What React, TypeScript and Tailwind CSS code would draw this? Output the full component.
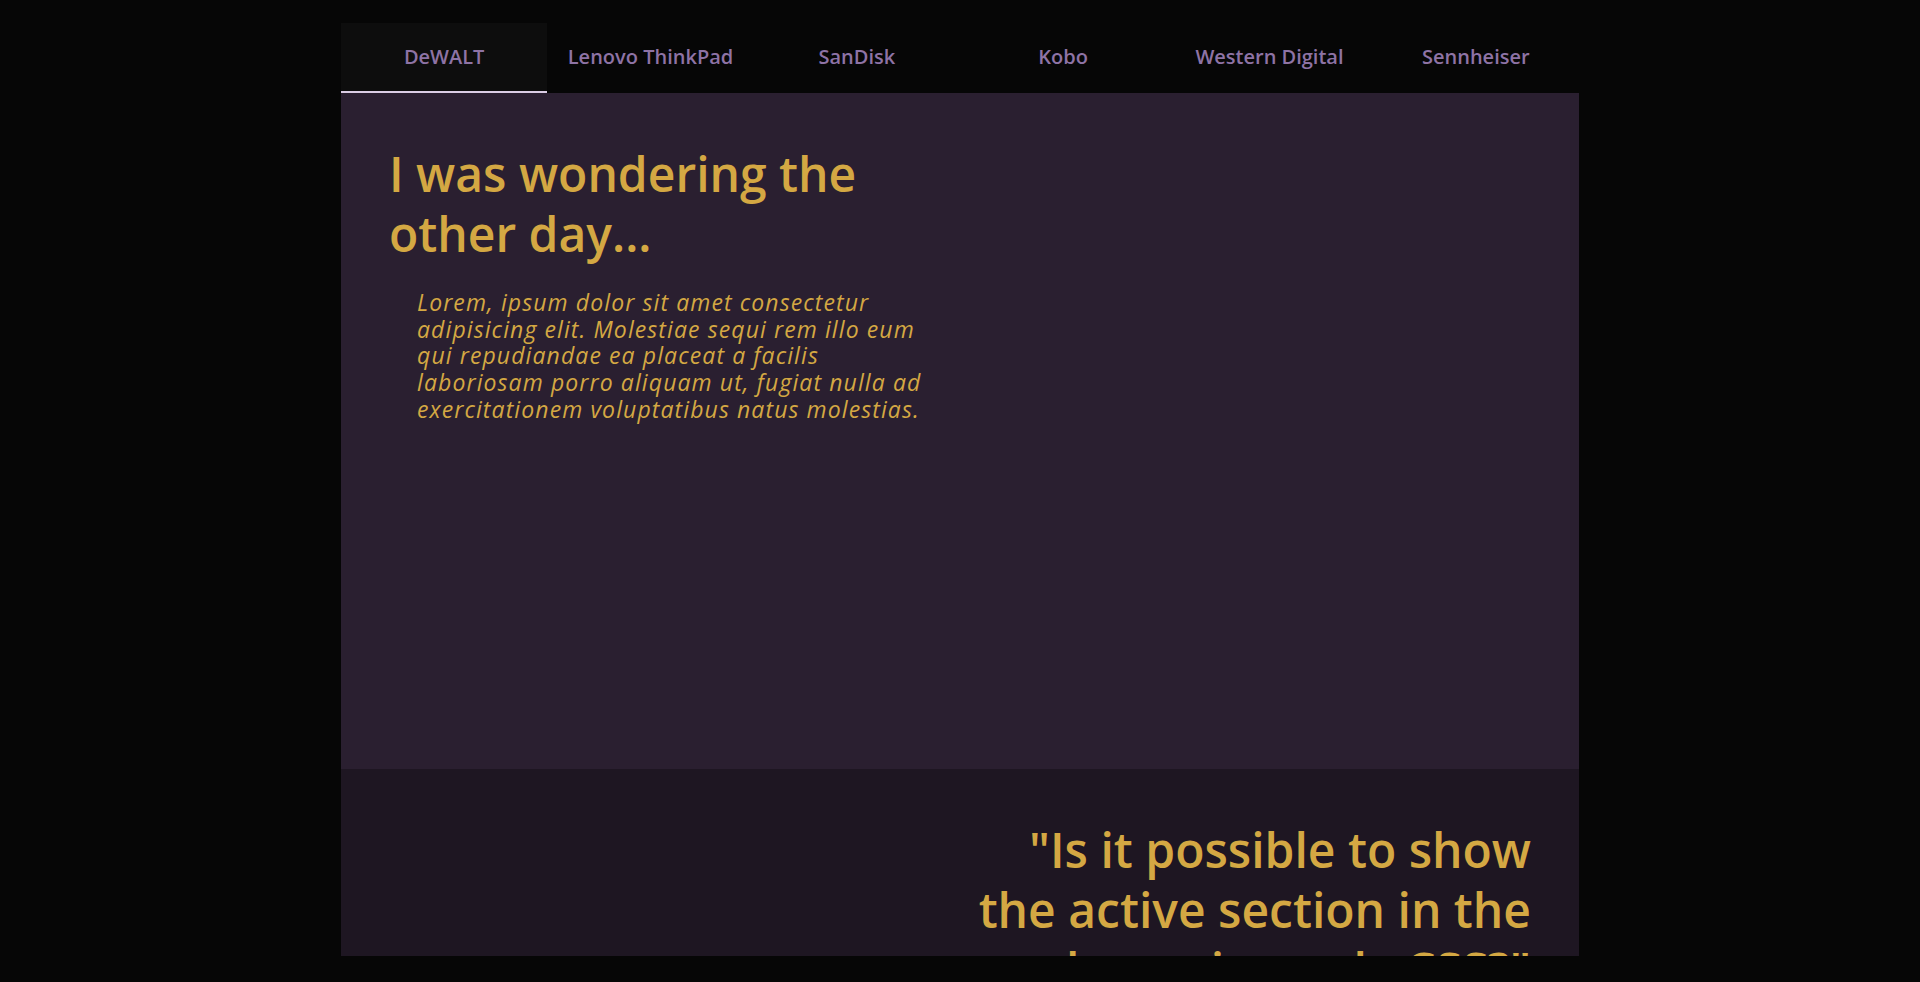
const tabs = ["DeWALT", "Lenovo ThinkPad", "SanDisk", "Kobo", "Western Digital", "Sennheiser"];

export default function App() {
  return (
    <div className="min-h-screen bg-[#060606] pt-[23px] font-['Open_Sans',sans-serif]">
      <div className="mx-auto w-[1238px]">
        <nav className="flex h-[70px]">
          {tabs.map((t, i) => (
            <a
              key={t}
              href={`#s${i}`}
              className={
                i === 0
                  ? "flex flex-1 items-center justify-center border-b-2 border-[#dccde6] bg-[#0d0d0d] text-[20px] font-semibold text-[#8e73a5]"
                  : "flex flex-1 items-center justify-center border-b-2 border-transparent text-[20px] font-semibold text-[#8e73a5]"
              }
            >
              {t}
            </a>
          ))}
        </nav>

        <main className="h-[863px] overflow-hidden">
          <section id="s0" className="grid h-[676px] grid-cols-2 bg-[#2a1f30] px-12 pt-[51px]">
            <div>
              <h1 className="text-[48px] font-semibold leading-[60px] text-[#d4a843]">
                I was wondering the other day...
              </h1>
              <p className="mx-7 mt-[25px] text-[23px] italic leading-[26.65px] tracking-[1.1px] text-[#d4a843]">
                Lorem, ipsum dolor sit amet consectetur adipisicing elit. Molestiae sequi rem illo eum qui
                repudiandae ea placeat a facilis laboriosam porro aliquam ut, fugiat nulla ad exercitationem
                voluptatibus natus molestias.
              </p>
            </div>
          </section>

          <section id="s1" className="grid h-[676px] grid-cols-2 bg-[#1e1622] px-12 pt-[51px]">
            <div />
            <h2 className="text-right text-[48px] font-semibold leading-[60px] text-[#d4a843]">
              "Is it possible to show the active section in the navbar using only CSS?"
            </h2>
          </section>
        </main>
      </div>
    </div>
  );
}
